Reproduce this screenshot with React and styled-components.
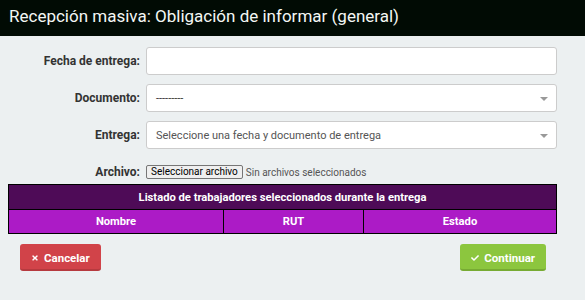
import React from "react";
import styled, { createGlobalStyle } from "styled-components";
import { FaTimes, FaCheck } from "react-icons/fa";

const Global = createGlobalStyle`
  html, body {
    margin: 0;
    padding: 0;
    background: #ecf0f1;
    font-family: Roboto, "Liberation Sans", Arial, sans-serif;
    color: #333;
  }
`;

const Header = styled.div`
  height: 36px;
  box-sizing: border-box;
  padding: 6px 9px 0;
  background: #010b04;
  color: #f4f7f4;
  font-size: 17px;
  line-height: 20px;
`;

const Body = styled.div`
  padding: 11px 28px 0 8px;
`;

const Row = styled.div`
  display: flex;
  align-items: center;
  margin-bottom: ${(p) => p.$gap || 9}px;
`;

const Label = styled.label`
  width: 132px;
  padding-right: 6px;
  text-align: right;
  font-size: 12px;
  font-weight: 700;
  line-height: 14px;
  color: #333;
`;

const Field = styled.div`
  flex: 1;
  height: 28px;
  box-sizing: border-box;
  position: relative;
  display: flex;
  align-items: center;
  padding: 0 24px 0 9px;
  background: #fff;
  border: 1px solid #ccc;
  border-radius: 3px;
  font-size: 11px;
  color: ${(p) => (p.$muted ? "#555" : "#333")};
`;

const Arrow = styled.span`
  position: absolute;
  right: 8px;
  top: 12px;
  border-left: 4px solid transparent;
  border-right: 4px solid transparent;
  border-top: 4px solid #999;
`;

const FileButton = styled.span`
  display: inline-block;
  height: 12px;
  line-height: 12px;
  padding: 0 4px;
  border: 1px solid #767676;
  border-radius: 2px;
  background: #efefef;
  font-size: 10px;
  color: #000;
`;

const FileName = styled.span`
  margin-left: 3px;
  font-size: 10px;
  color: #555;
`;

const Table = styled.table`
  width: 100%;
  border-collapse: collapse;
  font-size: 11.2px;
  font-weight: 700;
  color: #fff;
  text-align: center;
`;

const Cell = styled.th`
  border: 1px solid #000;
  padding: 0;
  height: ${(p) => p.$h}px;
  background: ${(p) => p.$bg};
  width: ${(p) => p.$w || "auto"};
`;

const Actions = styled.div`
  display: flex;
  justify-content: space-between;
  padding: 10px 11px 0 12px;
`;

const Button = styled.button`
  display: inline-flex;
  align-items: center;
  gap: 5px;
  height: 27px;
  padding: 2px 11px 0;
  border: none;
  border-bottom: 2px solid ${(p) => p.$shade};
  border-radius: 3px;
  background: ${(p) => p.$bg};
  color: #fff;
  font-family: inherit;
  font-size: 11.5px;
  font-weight: 700;
  svg {
    width: 8px;
    height: 8px;
  }
`;

export default function App() {
  return (
    <>
      <Global />
      <Header>Recepción masiva: Obligación de informar (general)</Header>
      <Body>
        <Row>
          <Label>Fecha de entrega:</Label>
          <Field />
        </Row>
        <Row>
          <Label>Documento:</Label>
          <Field>
            ---------
            <Arrow />
          </Field>
        </Row>
        <Row $gap={16}>
          <Label>Entrega:</Label>
          <Field $muted>
            Seleccione una fecha y documento de entrega
            <Arrow />
          </Field>
        </Row>
        <Row $gap={5}>
          <Label>Archivo:</Label>
          <FileButton>Seleccionar archivo</FileButton>
          <FileName>Sin archivos seleccionados</FileName>
        </Row>
        <Table>
          <thead>
            <tr>
              <Cell colSpan={3} $h={24} $bg="#4e0b57">
                Listado de trabajadores seleccionados durante la entrega
              </Cell>
            </tr>
            <tr>
              <Cell $h={23} $bg="#ac1bc6" $w="214px">Nombre</Cell>
              <Cell $h={23} $bg="#ac1bc6" $w="139px">RUT</Cell>
              <Cell $h={23} $bg="#ac1bc6">Estado</Cell>
            </tr>
          </thead>
        </Table>
        <Actions>
          <Button $bg="#d14349" $shade="#b63a3f">
            <FaTimes />
            Cancelar
          </Button>
          <Button $bg="#8cc63e" $shade="#77ab33">
            <FaCheck />
            Continuar
          </Button>
        </Actions>
      </Body>
    </>
  );
}
